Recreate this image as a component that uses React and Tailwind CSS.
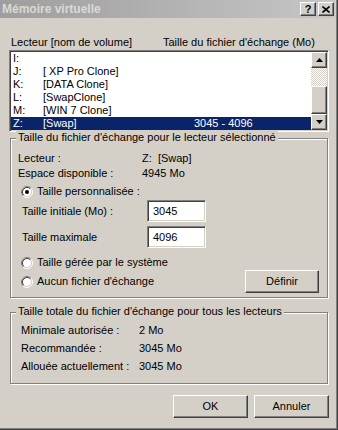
const raised =
  "border border-t-white border-l-white border-b-[#404040] border-r-[#404040] shadow-[inset_-1px_-1px_0_#808080] bg-[#d4d0c8]";
const sunken =
  "border border-t-[#808080] border-l-[#808080] border-b-white border-r-white shadow-[inset_1px_1px_0_#404040,inset_-1px_-1px_0_#d4d0c8]";

const drives = [
  { letter: "I:", name: "", size: "" },
  { letter: "J:", name: "[ XP Pro Clone]", size: "" },
  { letter: "K:", name: "[DATA Clone]", size: "" },
  { letter: "L:", name: "[SwapClone]", size: "" },
  { letter: "M:", name: "[WIN 7 Clone]", size: "" },
  { letter: "Z:", name: "[Swap]", size: "3045 - 4096", selected: true },
];

const Radio = ({ checked }) => (
  <svg width="12" height="12" viewBox="0 0 12 12" className="shrink-0">
    <circle cx="6" cy="6" r="4.5" fill="#fff" />
    <path d="M2.11 9.89 A5.5 5.5 0 0 1 9.89 2.11" stroke="#808080" fill="none" />
    <path d="M9.89 2.11 A5.5 5.5 0 0 1 2.11 9.89" stroke="#fff" fill="none" />
    <path d="M2.82 9.18 A4.5 4.5 0 0 1 9.18 2.82" stroke="#404040" fill="none" />
    <path d="M9.18 2.82 A4.5 4.5 0 0 1 2.82 9.18" stroke="#d4d0c8" fill="none" />
    {checked && <circle cx="6" cy="6" r="2" fill="#000" />}
  </svg>
);

const Arrow = ({ down }) => (
  <svg width="7" height="4" viewBox="0 0 7 4">
    <path d={down ? "M0 0H7L3.5 4Z" : "M0 4H7L3.5 0Z"} fill="#000" />
  </svg>
);

const GroupBox = ({ title, className, children }) => (
  <div
    className={`relative ml-[1px] mr-[1px] border border-[#808080] shadow-[1px_1px_0_#fff,inset_1px_1px_0_#fff] ${className}`}
  >
    <span className="absolute top-[-8px] left-[5px] px-[2px] bg-[#d4d0c8] leading-[13px]">
      {title}
    </span>
    {children}
  </div>
);

const RadioRow = ({ checked, children }) => (
  <div className="flex items-center gap-[4px] ml-[3px] h-[13px]">
    <Radio checked={checked} />
    <span>{children}</span>
  </div>
);

export default function App() {
  return (
    <div className="w-[338px] h-[430px] bg-[#d4d0c8] border-r border-b border-[#404040] shadow-[inset_-1px_-1px_0_#808080] pr-[2px] pb-[2px] flex flex-col font-['Liberation_Sans',Arial,sans-serif] text-[11px] leading-[13px] text-black select-none">
      {/* title bar */}
      <div className="h-[18px] flex items-center pl-[2px] pr-[1px] bg-linear-to-r from-[#9e9e9e] to-[#c6c6c6]">
        <span className="font-bold text-[12px] text-[#dcd9d3]">Mémoire virtuelle</span>
        <div className="ml-auto flex gap-[2px]">
          <div className={`${raised} w-[16px] h-[14px] flex items-center justify-center font-bold text-[11px] leading-none`}>
            ?
          </div>
          <div className={`${raised} w-[16px] h-[14px] flex items-center justify-center`}>
            <svg width="8" height="7" viewBox="0 0 8 7">
              <path d="M0.5 0.5L7.5 6.5M7.5 0.5L0.5 6.5" stroke="#000" strokeWidth="1.6" />
            </svg>
          </div>
        </div>
      </div>

      <div className="flex flex-col pl-[9px] pr-[6px]">
        {/* column headers */}
        <div className="flex mt-[18px] h-[13px]">
          <span className="w-[154px] pl-[2px]">Lecteur [nom de volume]</span>
          <span>Taille du fichier d'échange (Mo)</span>
        </div>

        {/* drive list */}
        <div className={`${sunken} mt-[1px] h-[82px] p-[1px] bg-white flex`}>
          <div className="flex-1 flex flex-col">
            {drives.map((d) => (
              <div
                key={d.letter}
                className={`h-[13px] flex items-center pl-[2px] whitespace-pre ${d.selected ? "bg-[#0a246a] text-white" : ""}`}
              >
                <span className="w-[30px]">{d.letter}</span>
                <span className="w-[151px]">{d.name}</span>
                <span>{d.size}</span>
              </div>
            ))}
          </div>
          <div className="w-[16px] flex flex-col">
            <div className={`${raised} h-[16px] flex items-center justify-center`}>
              <Arrow />
            </div>
            <div className="h-[18px] bg-[repeating-conic-gradient(#d4d0c8_0_25%,#fff_0_50%)] bg-[length:2px_2px]" />
            <div className={`${raised} h-[28px]`} />
            <div className={`${raised} h-[16px] flex items-center justify-center`}>
              <Arrow down />
            </div>
          </div>
        </div>

        {/* selected drive group */}
        <GroupBox title="Taille du fichier d'échange pour le lecteur sélectionné" className="mt-[6px] h-[160px] pt-[12px] pl-[7px]">
          <div className="grid grid-cols-[124px_1fr] leading-[15px]">
            <span>Lecteur :</span>
            <span className="whitespace-pre">Z:  [Swap]</span>
            <span>Espace disponible :</span>
            <span>4945 Mo</span>
          </div>
          <div className="mt-[4px]">
            <RadioRow checked>Taille personnalisée :</RadioRow>
          </div>
          <div className="flex items-center mt-[2px] h-[22px]">
            <span className="w-[125px] ml-[4px]">Taille initiale (Mo) :</span>
            <div className={`${sunken} w-[59px] h-[22px] bg-white flex items-center pl-[5px]`}>3045</div>
          </div>
          <div className="flex items-center mt-[4px] h-[22px]">
            <span className="w-[125px] ml-[4px]">Taille maximale</span>
            <div className={`${sunken} w-[59px] h-[22px] bg-white flex items-center pl-[5px]`}>4096</div>
          </div>
          <div className="mt-[8px]">
            <RadioRow>Taille gérée par le système</RadioRow>
          </div>
          <div className="flex items-center mt-[1px] h-[23px]">
            <RadioRow>Aucun fichier d'échange</RadioRow>
            <button className={`${raised} ml-auto mr-[8px] w-[74px] h-[23px] text-[11px]`}>Définir</button>
          </div>
        </GroupBox>

        {/* totals group */}
        <GroupBox title="Taille totale du fichier d'échange pour tous les lecteurs" className="mt-[14px] h-[72px] pt-[8px] pl-[10px]">
          <div className="grid grid-cols-[118px_1fr] leading-[18px]">
            <span>Minimale autorisée :</span>
            <span>2 Mo</span>
            <span>Recommandée :</span>
            <span>3045 Mo</span>
            <span>Allouée actuellement :</span>
            <span>3045 Mo</span>
          </div>
        </GroupBox>

        {/* dialog buttons */}
        <div className="flex justify-end gap-[6px] mt-[11px]">
          <button className={`${raised} w-[75px] h-[23px] text-[11px]`}>OK</button>
          <button className={`${raised} w-[75px] h-[23px] text-[11px]`}>Annuler</button>
        </div>
      </div>
    </div>
  );
}
